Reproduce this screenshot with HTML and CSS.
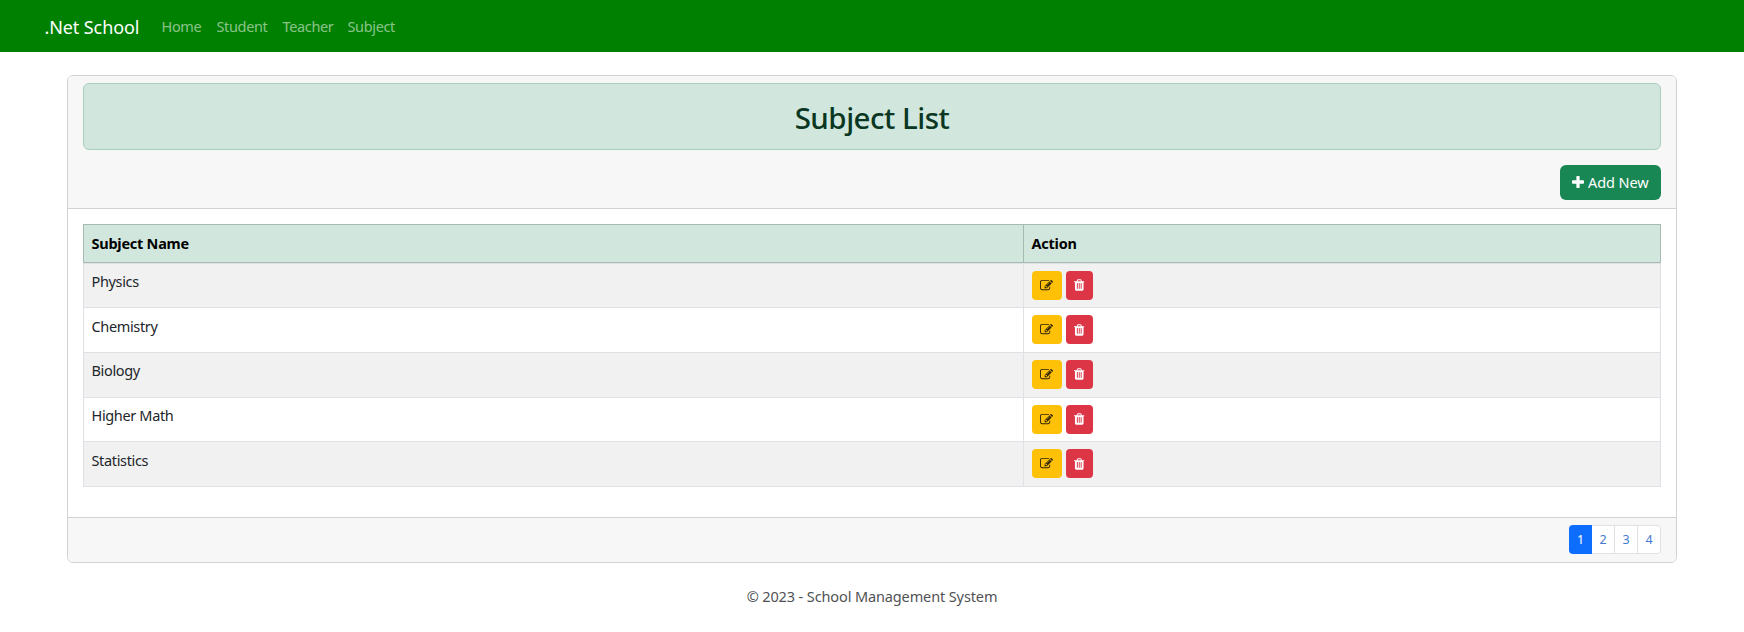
FILE: index.html
```html
<!DOCTYPE html>
<html lang="en">
<head>
<meta charset="utf-8">
<title>Subject List - .Net School</title>
<link rel="stylesheet" href="styles.css">
</head>
<body>
<svg class="sprite" aria-hidden="true">
  <symbol id="plus" viewBox="192 128 1408 1408"><path d="M1600 736v192q0 40-28 68t-68 28h-416v416q0 40-28 68t-68 28h-192q-40 0-68-28t-28-68v-416h-416q-40 0-68-28t-28-68v-192q0-40 28-68t68-28h416v-416q0-40 28-68t68-28h192q40 0 68 28t28 68v416h416q40 0 68 28t28 68z"/></symbol>
  <symbol id="edit" viewBox="0 0 1792 1792"><path d="M888 1184l116-116-152-152-116 116v56h96v96h56zm440-720q-16-16-33 1l-350 350q-17 17-1 33t33-1l350-350q17-17 1-33zm80 594v190q0 119-84.500 203.500t-203.500 84.500h-832q-119 0-203.500-84.500t-84.500-203.500v-832q0-119 84.500-203.500t203.500-84.500h832q63 0 117 25 15 7 18 23 3 17-9 29l-49 49q-14 14-32 8-23-6-45-6h-832q-66 0-113 47t-47 113v832q0 66 47 113t113 47h832q66 0 113-47t47-113v-126q0-13 9-22l64-64q15-15 35-7t20 29zm-96-738l288 288-672 672h-288v-288zm444 132l-92 92-288-288 92-92q28-28 68-28t68 28l152 152q28 28 28 68t-28 68z"/></symbol>
  <symbol id="trash" viewBox="192 128 1408 1536"><path d="M704 1376v-704q0-14-9-23t-23-9h-64q-14 0-23 9t-9 23v704q0 14 9 23t23 9h64q14 0 23-9t9-23zm256 0v-704q0-14-9-23t-23-9h-64q-14 0-23 9t-9 23v704q0 14 9 23t23 9h64q14 0 23-9t9-23zm256 0v-704q0-14-9-23t-23-9h-64q-14 0-23 9t-9 23v704q0 14 9 23t23 9h64q14 0 23-9t9-23zm-544-992h448l-48-117q-7-9-17-11h-317q-10 2-17 11zm928 32v64q0 14-9 23t-23 9h-96v948q0 83-47 143.500t-113 60.500h-832q-66 0-113-58.500t-47-141.500v-952h-96q-14 0-23-9t-9-23v-64q0-14 9-23t23-9h309l70-167q15-37 54-63t79-26h320q40 0 79 26t54 63l70 167h309q14 0 23 9t9 23z"/></symbol>
</svg>
<header class="navbar">
  <a class="brand">.Net School</a>
  <nav class="nav"><a class="home">Home</a><a class="student">Student</a><a class="teacher">Teacher</a><a class="subject">Subject</a></nav>
</header>
<main class="card">
  <div class="card-header">
    <h1 class="title"><span>Subject List</span></h1>
    <a class="add"><svg><use href="#plus"/></svg><span>Add New</span></a>
  </div>
  <div class="card-body">
    <div class="table">
      <div class="row head"><div class="name">Subject Name</div><div class="action">Action</div></div>
      <div class="row odd"><div class="name">Physics</div><div class="action"><a class="btn edit"><svg><use href="#edit"/></svg></a><a class="btn trash"><svg><use href="#trash"/></svg></a></div></div>
      <div class="row"><div class="name">Chemistry</div><div class="action"><a class="btn edit"><svg><use href="#edit"/></svg></a><a class="btn trash"><svg><use href="#trash"/></svg></a></div></div>
      <div class="row odd"><div class="name">Biology</div><div class="action"><a class="btn edit"><svg><use href="#edit"/></svg></a><a class="btn trash"><svg><use href="#trash"/></svg></a></div></div>
      <div class="row"><div class="name">Higher Math</div><div class="action"><a class="btn edit"><svg><use href="#edit"/></svg></a><a class="btn trash"><svg><use href="#trash"/></svg></a></div></div>
      <div class="row odd"><div class="name">Statistics</div><div class="action"><a class="btn edit"><svg><use href="#edit"/></svg></a><a class="btn trash"><svg><use href="#trash"/></svg></a></div></div>
    </div>
  </div>
  <div class="card-footer">
    <div class="pages"><a class="active">1</a><a>2</a><a>3</a><a>4</a></div>
  </div>
</main>
<footer class="footer">© 2023 - School Management System</footer>
</body>
</html>
```
FILE: styles.css
```css
* { box-sizing: border-box; }
body {
  margin: 0;
  height: 632px;
  overflow: hidden;
  background: #fff;
  color: #212529;
  font: 14.5px/22px "Noto Sans", "Open Sans", sans-serif;
  letter-spacing: -0.35px;
}
svg { display: block; fill: currentColor; }
.sprite { display: none; }
.navbar {
  display: flex;
  height: 52px;
  padding: 0 44.500px;
  align-items: center;
  background: #008000;
}
.brand { width: 117px; color: #fff; font-size: 18px; letter-spacing: -0.1px; white-space: nowrap; padding-top: 1px; }
.nav { display: flex; color: rgba(255, 255, 255, 0.55); white-space: nowrap; }
.home { width: 55px; }
.student { width: 66px; }
.teacher { width: 65px; }
.card {
  width: 1610px;
  height: 488px;
  margin: 22.500px auto 0;
  border: 1px solid #d2d2d2;
  border-radius: 6px;
  overflow: hidden;
}
.card-header {
  display: flex;
  flex-direction: column;
  align-items: flex-end;
  height: 133px;
  padding: 7.500px 15px 0;
  background: #f7f7f7;
  border-bottom: 1px solid #d2d2d2;
}
.title {
  width: 100%;
  height: 67px;
  margin: 0 0 15px;
  border: 1px solid #a9cfbd;
  border-radius: 6px;
  background: #d1e7dd;
  color: #0a3622;
  font-size: 29.5px;
  font-weight: 500;
  line-height: 68px;
  letter-spacing: -0.5px;
  text-align: center;
}
.add {
  display: flex;
  align-items: center;
  gap: 4px;
  width: 101px;
  height: 35px;
  padding: 0 0 1px 12px;
  border-radius: 6px;
  background: #198754;
  color: #fff;
  letter-spacing: -0.1px;
  white-space: nowrap;
}
.add svg { width: 12px; height: 12px; }
.card-body { height: 308px; padding: 15px; }
.table { border: 1px solid #dee2e6; border-top: 0; }
.row { display: grid; grid-template-columns: 940px 1fr; height: 44.700px; border-top: 1px solid #dee2e6; }
.name { padding: 6.500px 7.500px; border-right: 1px solid #dee2e6; }
.odd { background: #f1f1f1; }
.head {
  height: 39px;
  margin: 0 -1px;
  border: 1px solid #a7b9b1;
  background: #d1e7dd;
  color: #000;
  font-weight: 700;
  letter-spacing: -0.25px;
}
.head .name { padding-top: 7px; border-color: #a7b9b1; }
.action { display: flex; gap: 4.500px; padding: 7px 7.500px; }
.btn { display: flex; align-items: center; justify-content: center; height: 29px; border-radius: 4px; }
.edit { width: 30px; background: #ffc107; color: #302506; }
.edit svg { width: 13px; height: 13px; }
.trash { width: 27px; background: #dc3545; color: #fff; }
.trash svg { width: 10.500px; height: 12px; }
.card-footer {
  display: flex;
  justify-content: flex-end;
  height: 45px;
  padding: 7px 15px 0;
  border-top: 1px solid #d2d2d2;
  background: #f7f7f7;
}
.pages { display: flex; height: 29px; border-radius: 4px; overflow: hidden; background: #fff; }
.pages a {
  width: 23px;
  border: 1px solid #dee2e6;
  border-left: 0;
  color: #4679d0;
  font-size: 12.5px;
  line-height: 27px;
  text-align: center;
}
.pages a:last-child { border-radius: 0 4px 4px 0; }
.pages .active { border: 0; background: #0d6efd; color: #fff; line-height: 29px; }
.footer { margin-top: 22px; color: #505254; letter-spacing: -0.12px; text-align: center; }
```
